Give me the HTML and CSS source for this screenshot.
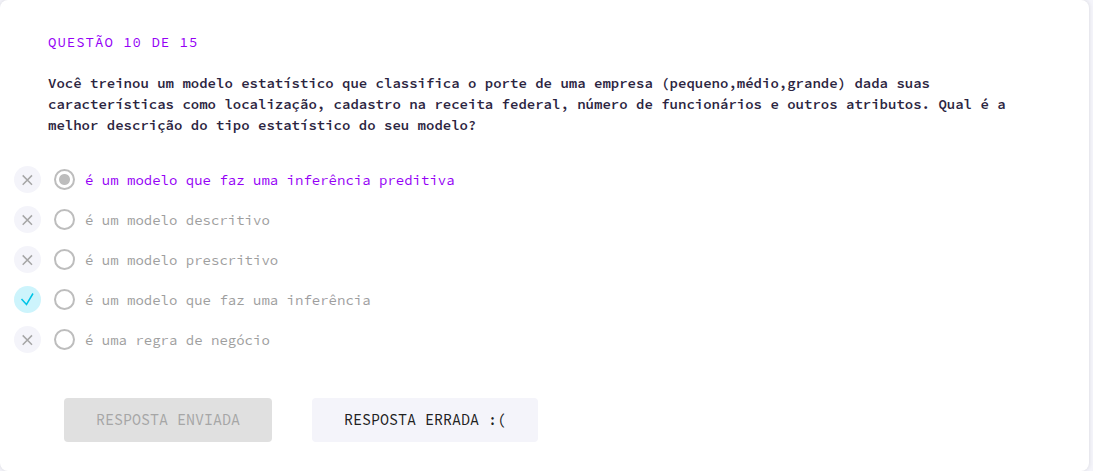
FILE: index.html
```html
<!DOCTYPE html>
<html lang="pt-BR">
<head>
<meta charset="utf-8">
<meta name="viewport" content="width=device-width, initial-scale=1">
<title>Questão 10 de 15</title>
<link rel="stylesheet" href="styles.css">
</head>
<body>
<svg class="sprite" aria-hidden="true">
  <symbol id="cross" viewBox="0 0 27 27"><path d="M8.700 9.400l9.300 9.300M18 9.400l-9.300 9.300"/></symbol>
  <symbol id="check" viewBox="0 0 27 27"><path d="M7.500 13l5 5.500 6.500-11"/></symbol>
</svg>
<main class="card">
  <form class="question">
    <p class="counter">QUESTÃO 10 DE 15</p>
    <h1 class="title">Você treinou um modelo estatístico que classifica o porte de uma empresa (pequeno,médio,grande) dada suas características como localização, cadastro na receita federal, número de funcionários e outros atributos. Qual é a melhor descrição do tipo estatístico do seu modelo?</h1>
    <ul class="options">
      <li class="option">
        <svg class="mark"><use href="#cross"/></svg>
        <input class="radio" type="radio" name="answer" id="a1" checked>
        <label class="label" for="a1">é um modelo que faz uma inferência preditiva</label>
      </li>
      <li class="option">
        <svg class="mark"><use href="#cross"/></svg>
        <input class="radio" type="radio" name="answer" id="a2">
        <label class="label" for="a2">é um modelo descritivo</label>
      </li>
      <li class="option">
        <svg class="mark"><use href="#cross"/></svg>
        <input class="radio" type="radio" name="answer" id="a3">
        <label class="label" for="a3">é um modelo prescritivo</label>
      </li>
      <li class="option">
        <svg class="mark mark-right"><use href="#check"/></svg>
        <input class="radio" type="radio" name="answer" id="a4">
        <label class="label" for="a4">é um modelo que faz uma inferência</label>
      </li>
      <li class="option">
        <svg class="mark"><use href="#cross"/></svg>
        <input class="radio" type="radio" name="answer" id="a5">
        <label class="label" for="a5">é uma regra de negócio</label>
      </li>
    </ul>
    <div class="actions">
      <button class="button" type="submit" disabled>RESPOSTA ENVIADA</button>
      <button class="button button-result" type="button">RESPOSTA ERRADA :(</button>
    </div>
  </form>
</main>
</body>
</html>
```
FILE: styles.css
```css
* {
  box-sizing: border-box;
}

body {
  margin: 0;
  background: #f4f4fa;
  font-family: "Source Code Pro", "Liberation Mono", monospace;
  font-size: 14px;
  line-height: 21px;
  color: #2b2440;
}

.sprite {
  display: none;
}

.card {
  min-height: 100vh;
  margin-right: 4px;
  padding: 32px 48px 29px 14px;
  background: #fff;
  border-radius: 8px;
  box-shadow: 0 0 4px rgba(0, 0, 0, 0.12);
}

.counter {
  margin: 0 0 20px 34px;
  letter-spacing: 1px;
  color: #9500f6;
}

.title {
  margin: 0 0 24px 34px;
  font-size: 14px;
  font-weight: 600;
}

.options {
  margin: 0 0 38px;
  padding: 0;
  list-style: none;
}

.option {
  display: flex;
  align-items: center;
  height: 40px;
}

.mark {
  width: 27px;
  height: 27px;
  margin: 0 13px 1px 0;
  border-radius: 50%;
  background: #f4f4fa;
  fill: none;
  stroke: #a6a6a6;
  stroke-width: 1.5;
}

.mark-right {
  background: #cdf4fc;
  stroke: #00c4e6;
}

.radio {
  appearance: none;
  width: 21px;
  height: 21px;
  margin: 0 10px 1px 0;
  border: 2px solid #bdbdbd;
  border-radius: 50%;
}

.radio:checked {
  background: radial-gradient(circle, #bdbdbd 5px, transparent 6px);
}

.label {
  color: #9e9e9e;
}

.radio:checked + .label {
  color: #9500f6;
}

.actions {
  display: flex;
  flex-wrap: wrap;
  gap: 40px;
  margin-left: 50px;
}

.button {
  height: 44px;
  padding: 0 32px 2px;
  border: 0;
  border-radius: 4px;
  background: #e0e0e0;
  font-family: inherit;
  font-size: 15px;
  color: #a6a6a6;
}

.button-result {
  background: #f4f4fa;
  color: #212121;
}
```
